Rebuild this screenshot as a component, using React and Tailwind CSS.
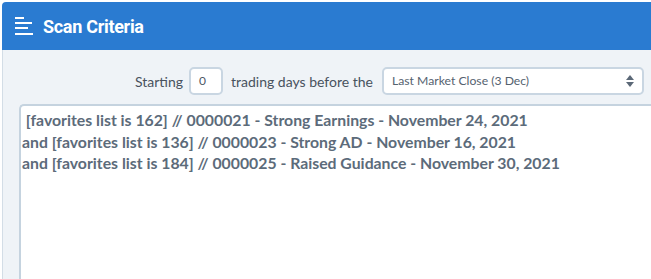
import React from "react";

const CRITERIA = [
  " [favorites list is 162] // 0000021 - Strong Earnings - November 24, 2021",
  "and [favorites list is 136] // 0000023 - Strong AD - November 16, 2021",
  "and [favorites list is 184] // 0000025 - Raised Guidance - November 30, 2021",
].join("\n");

function MenuIcon() {
  return (
    <svg width="20" height="20" viewBox="0 0 20 20" className="shrink-0">
      <rect x="0" y="1" width="9" height="2" fill="white" />
      <rect x="0" y="6" width="17" height="2" fill="white" />
      <rect x="0" y="11" width="13" height="2" fill="white" />
      <rect x="0" y="17" width="18" height="2" fill="white" />
    </svg>
  );
}

function UpDown() {
  return (
    <svg width="8" height="12" viewBox="0 0 8 12" className="shrink-0">
      <path d="M4 0 L8 5 L0 5 Z" fill="#5b6877" />
      <path d="M4 12 L8 7 L0 7 Z" fill="#5b6877" />
    </svg>
  );
}

export default function App() {
  return (
    <div className="w-[651px] h-[279px] overflow-hidden bg-white pt-[2px] pl-[2px] flex flex-col" style={{ fontFamily: "Lato, 'Open Sans', sans-serif" }}>
      <div className="h-[48px] shrink-0 bg-[#2a7bd1] rounded-tl-[4px] flex items-center pl-[13px] gap-[8px]">
        <MenuIcon />
        <span className="text-white text-[18px] font-bold tracking-[-0.3px] pt-[1px]" style={{ fontFamily: "Roboto, sans-serif" }}>Scan Criteria</span>
      </div>

      <div className="flex-1 bg-[#eff3f7] border-l border-[#d3dde6] flex flex-col">
        <div className="flex items-center justify-end pr-[7px] pt-[17px] text-[14px] text-[#48525e]">
          <span>Starting</span>
          <div className="ml-[6px] w-[34px] h-[28px] bg-white border-2 border-[#c9d6e2] rounded-[5px] flex items-center pl-[8px] text-[12px] text-[#4b5866]">0</div>
          <span className="ml-[8px]">trading days before the</span>
          <div className="ml-[9px] w-[262px] h-[28px] bg-white border-2 border-[#c9d6e2] rounded-[5px] flex items-center justify-between pl-[8px] pr-[8px] text-[12.2px] text-[#55626f]">
            <span>Last Market Close (3 Dec)</span>
            <UpDown />
          </div>
        </div>

        <textarea
          readOnly
          value={CRITERIA}
          className="mt-[9px] ml-[16px] flex-1 w-[650px] resize-none bg-white border-2 border-r-0 border-b-0 border-[#c5d3df] rounded-tl-[5px] pt-[3px] pl-[1px] text-[15.8px] font-bold leading-[21.5px] text-[#5c6b7a] outline-none overflow-hidden"
          style={{ fontFamily: "Lato, sans-serif" }}
        />
      </div>
    </div>
  );
}
